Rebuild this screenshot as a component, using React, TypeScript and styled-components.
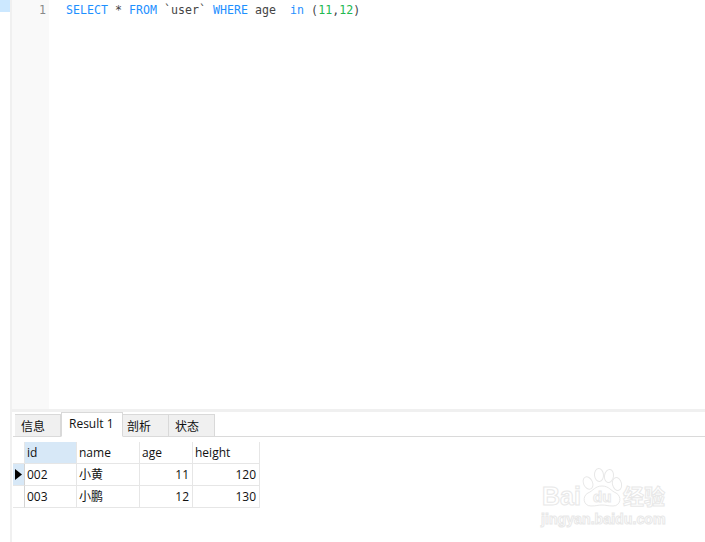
import React from "react";
import styled, { createGlobalStyle } from "styled-components";

const Global = createGlobalStyle`
  html, body { margin: 0; padding: 0; background: #fff; overflow: hidden; }
  #root { width: 705px; height: 542px; }
`;
const Page = styled.div`
  width: 705px; height: 542px; display: flex; background: #fff;
  font-family: "Open Sans", "Noto Sans CJK SC", sans-serif;
  color: #111; overflow: hidden;
`;
const LeftMargin = styled.div`width: 10px; flex: none; background: #fff;`;
const Selection = styled.div`height: 12px; background: #cce8ff;`;
const Strip = styled.div`width: 2px; flex: none; background: #f0f0f0;`;
const Main = styled.div`flex: 1; min-width: 0; display: flex; flex-direction: column;`;
const Editor = styled.div`height: 409px; flex: none; display: flex; background: #fff;`;
const Gutter = styled.div`
  width: 37px; flex: none; box-sizing: border-box; background: #f9f9f9;
  text-align: right; padding: 3px 3px 0 0; color: #888;
  font: 11.6px/14px "DejaVu Sans Mono", monospace;
`;
const Code = styled.div`
  padding: 3px 0 0 17px; white-space: pre;
  font: 11.6px/14px "DejaVu Sans Mono", monospace; color: #444;
  letter-spacing: 0.02px;
`;
const Kw = styled.span`color: #1e90ff;`;
const Num = styled.span`color: #22b850;`;
const Divider = styled.div`height: 3px; flex: none; background: #f0f0f0;`;
const TabBar = styled.div`
  height: 25px; flex: none; display: flex; align-items: flex-end; box-sizing: border-box;
  margin-left: 1px; padding-left: 2px; border-bottom: 1px solid #dadada;
`;
const Tab = styled.div<{ $active?: boolean; $w: number; $pad: number }>`
  width: ${(p) => p.$w}px; box-sizing: border-box; font-size: 12px;
  padding-left: ${(p) => p.$pad}px;
  height: ${(p) => (p.$active ? 25 : 22)}px;
  line-height: ${(p) => (p.$active ? 21 : 23)}px;
  background: ${(p) => (p.$active ? "#fff" : "#f0f0f0")};
  border: 1px solid #d9d9d9; border-left-width: ${(p) => (p.$active ? 1 : 0)}px;
  border-bottom: ${(p) => (p.$active ? "1px solid #fff" : "0")};
  margin-bottom: ${(p) => (p.$active ? -1 : 0)}px;
`;
const Table = styled.div`
  margin: 5px 0 0 1px; display: grid; width: 247px;
  grid-template-columns: 12px 52px 63px 53px 67px;
  grid-auto-rows: 22px; font-size: 12px;
`;
const Cell = styled.div<{ $right?: boolean; $sel?: boolean }>`
  box-sizing: border-box; border-right: 1px solid #e6e6e6; border-bottom: 1px solid #e6e6e6;
  padding: 0 3px 0 2px; line-height: 21px; white-space: nowrap;
  text-align: ${(p) => (p.$right ? "right" : "left")};
  background: ${(p) => (p.$sel ? "#d7e8f7" : "#fff")};
`;
const Marker = styled(Cell)`
  padding: 0; display: flex; align-items: center; justify-content: center;
  border-right-color: #d4d4d4;
`;
const Arrow = styled.svg`width: 7px; height: 11px; display: block;`;
const Watermark = styled.svg`
  position: absolute; left: 535px; top: 462px; width: 140px; height: 70px;
`;
const WmText = styled.text<{ $size: number }>`
  font-family: "Liberation Sans", "Noto Sans CJK SC", sans-serif;
  font-size: ${(p) => p.$size}px; font-weight: 700;
  fill: #fff; stroke: #e8e8e8; stroke-width: 1;
`;

const rows = [
  ["002", "小黄", "11", "120"],
  ["003", "小鹏", "12", "130"],
];

export default function App() {
  return (
    <Page>
      <Global />
      <LeftMargin><Selection /></LeftMargin>
      <Strip />
      <Main>
        <Editor>
          <Gutter>1</Gutter>
          <Code>
            <Kw>SELECT</Kw> * <Kw>FROM</Kw> `user` <Kw>WHERE</Kw> age  <Kw>in</Kw> (<Num>11</Num>,<Num>12</Num>)
          </Code>
        </Editor>
        <Divider />
        <TabBar>
          <Tab $w={46} $pad={6}>信息</Tab>
          <Tab $w={62} $pad={7} $active>Result 1</Tab>
          <Tab $w={46} $pad={4}>剖析</Tab>
          <Tab $w={46} $pad={6}>状态</Tab>
        </TabBar>
        <Table>
          <Cell />
          <Cell $sel>id</Cell>
          <Cell>name</Cell>
          <Cell>age</Cell>
          <Cell>height</Cell>
          {rows.map((r, i) => (
            <React.Fragment key={r[0]}>
              <Marker $sel={i === 0}>
                {i === 0 && (
                  <Arrow viewBox="0 0 7 11"><path d="M0 0 L7 5.5 L0 11 Z" fill="#000" /></Arrow>
                )}
              </Marker>
              <Cell>{r[0]}</Cell>
              <Cell>{r[1]}</Cell>
              <Cell $right>{r[2]}</Cell>
              <Cell $right>{r[3]}</Cell>
            </React.Fragment>
          ))}
        </Table>
      </Main>
      <Watermark viewBox="0 0 140 70">
        <g fill="#fff" stroke="#e8e8e8" strokeWidth="1">
          <ellipse cx="53" cy="21" rx="4.5" ry="6.5" transform="rotate(-25 53 21)" />
          <ellipse cx="64" cy="13" rx="4.5" ry="6.5" transform="rotate(-5 64 13)" />
          <ellipse cx="74" cy="14" rx="4.5" ry="6.5" transform="rotate(10 74 14)" />
          <ellipse cx="82" cy="22" rx="4.5" ry="6.5" transform="rotate(-15 82 22)" />
          <path d="M67 24 C74 24 76 29 81 31 C87 34 86 44 78 44 C73 44 71 43 67 43 C63 43 61 44 56 44 C48 44 47 34 53 31 C58 29 60 24 67 24 Z" />
        </g>
        <WmText x="7" y="43" $size={25}>Bai</WmText>
        <WmText x="58" y="40" $size={15}>du</WmText>
        <WmText x="88" y="42" $size={21}>经验</WmText>
        <WmText x="6" y="62" $size={14.2}>jingyan.baidu.com</WmText>
      </Watermark>
    </Page>
  );
}
